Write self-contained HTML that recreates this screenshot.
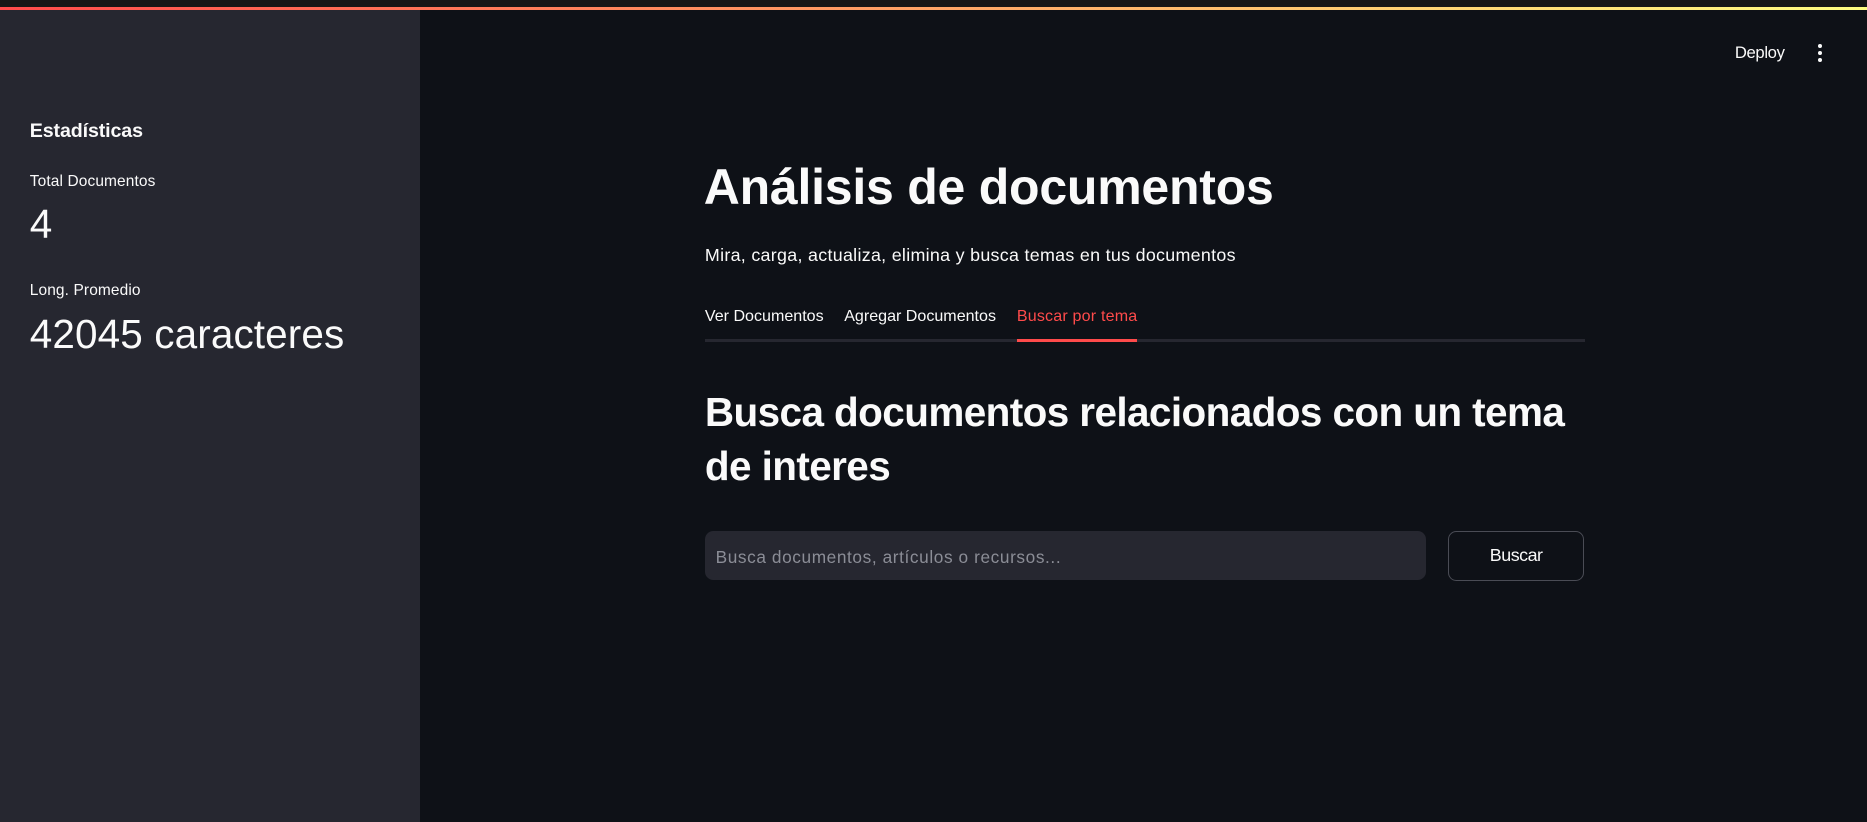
<!DOCTYPE html>
<html><head><meta charset="utf-8"><style>
html,body{margin:0;padding:0;background:#0e1117;overflow:hidden}
body{width:1867px;height:822px}
#z{zoom:1.1907;width:1568px;height:691px;position:relative;font-family:"Liberation Sans",sans-serif;color:#fafafa}
.a{position:absolute;white-space:nowrap}
</style></head><body><div id="z">
<div class="a" style="left:0;top:0;width:1568px;height:6px;background:#161616"></div>
<div class="a" style="left:0;top:6px;width:1568px;height:2.5px;background:linear-gradient(90deg,#ff4b4b,#fffd80)"></div>
<div class="a" style="left:0;top:8.5px;width:353px;height:683px;background:#262730"></div>
<div class="a" style="left:1457px;top:36px;font-size:14px;letter-spacing:-0.3px">Deploy</div>
<div class="a" style="left:1527px;top:37px;width:4px;height:16px">
<div style="width:3.5px;height:3.5px;border-radius:50%;background:#fafafa;margin-bottom:2.5px"></div>
<div style="width:3.5px;height:3.5px;border-radius:50%;background:#fafafa;margin-bottom:2.5px"></div>
<div style="width:3.5px;height:3.5px;border-radius:50%;background:#fafafa"></div></div>
<div class="a" style="left:25px;top:101px;font-size:16.5px;font-weight:bold;letter-spacing:-0.1px">Estadísticas</div>
<div class="a" style="left:25px;top:145px;font-size:13px;letter-spacing:0.1px">Total Documentos</div>
<div class="a" style="left:25px;top:169px;font-size:34px">4</div>
<div class="a" style="left:25px;top:237px;font-size:13px;letter-spacing:0.1px">Long. Promedio</div>
<div class="a" style="left:25px;top:261px;font-size:34px;letter-spacing:0.1px">42045 caracteres</div>
<div class="a" style="left:591px;top:133px;font-size:42px;font-weight:bold;letter-spacing:-0.2px">Análisis de documentos</div>
<div class="a" style="left:592px;top:206px;font-size:15px;letter-spacing:0.25px">Mira, carga, actualiza, elimina y busca temas en tus documentos</div>
<div class="a" style="left:592px;top:258px;font-size:13.5px;letter-spacing:0px">Ver Documentos</div>
<div class="a" style="left:709px;top:258px;font-size:13.5px;letter-spacing:0px">Agregar Documentos</div>
<div class="a" style="left:854px;top:258px;font-size:13.5px;letter-spacing:0.15px;color:#ff4b4b">Buscar por tema</div>
<div class="a" style="left:592px;top:285px;width:739px;height:2px;background:#262730"></div>
<div class="a" style="left:854px;top:285px;width:101px;height:2px;background:#ff4b4b"></div>
<div class="a" style="left:592px;top:323px;font-size:34px;font-weight:bold;letter-spacing:-0.5px;line-height:46px">Busca documentos relacionados con un tema<br>de interes</div>
<div class="a" style="left:592px;top:446px;width:606px;height:41px;background:#262730;border-radius:7px"></div>
<div class="a" style="left:601px;top:459px;font-size:14.5px;letter-spacing:0.5px;color:#8b8d96">Busca documentos, artículos o recursos...</div>
<div class="a" style="left:1216px;top:446px;width:113px;height:40px;border:1px solid #4a4c55;border-radius:7px;box-sizing:content-box;text-align:center;line-height:40px;font-size:15px;letter-spacing:-0.4px">Buscar</div>
</div></body></html>
